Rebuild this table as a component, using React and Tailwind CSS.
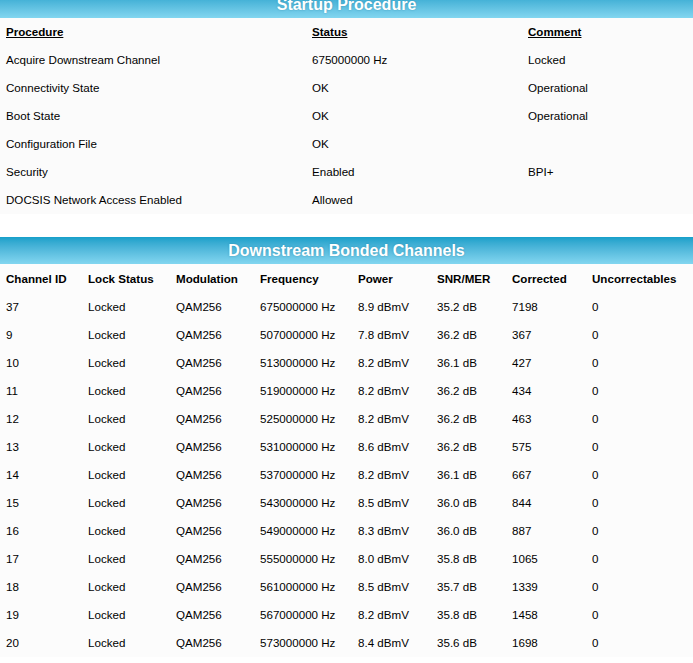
import React from "react";

const startup = [
  ["Acquire Downstream Channel", "675000000 Hz", "Locked"],
  ["Connectivity State", "OK", "Operational"],
  ["Boot State", "OK", "Operational"],
  ["Configuration File", "OK", ""],
  ["Security", "Enabled", "BPI+"],
  ["DOCSIS Network Access Enabled", "Allowed", ""],
];

const channels = [
  ["37", "675000000 Hz", "8.9 dBmV", "35.2 dB", "7198"],
  ["9", "507000000 Hz", "7.8 dBmV", "36.2 dB", "367"],
  ["10", "513000000 Hz", "8.2 dBmV", "36.1 dB", "427"],
  ["11", "519000000 Hz", "8.2 dBmV", "36.2 dB", "434"],
  ["12", "525000000 Hz", "8.2 dBmV", "36.2 dB", "463"],
  ["13", "531000000 Hz", "8.6 dBmV", "36.2 dB", "575"],
  ["14", "537000000 Hz", "8.2 dBmV", "36.1 dB", "667"],
  ["15", "543000000 Hz", "8.5 dBmV", "36.0 dB", "844"],
  ["16", "549000000 Hz", "8.3 dBmV", "36.0 dB", "887"],
  ["17", "555000000 Hz", "8.0 dBmV", "35.8 dB", "1065"],
  ["18", "561000000 Hz", "8.5 dBmV", "35.7 dB", "1339"],
  ["19", "567000000 Hz", "8.2 dBmV", "35.8 dB", "1458"],
  ["20", "573000000 Hz", "8.4 dBmV", "35.6 dB", "1698"],
];

const Banner = ({ title }) => (
  <div className="h-[27px] bg-gradient-to-b from-[#15a0ca] to-[#82d6f0] flex items-center justify-center">
    <h2 className="text-white font-bold text-[16px] leading-none [text-shadow:0_0_2px_rgba(0,80,110,0.35)]">{title}</h2>
  </div>
);

const startupCols = "grid grid-cols-[306px_216px_1fr]";
const chanCols = "grid grid-cols-[82px_88px_84px_98px_79px_75px_80px_1fr]";

export default function App() {
  return (
    <div className="min-h-screen bg-[#1c2c3a] text-black text-[11.6px] font-['Liberation_Sans',Arial,sans-serif]">
      <div className="bg-white -mt-[9px]">
        <Banner title="Startup Procedure" />
        <div className="bg-[#fbfbfb]">
          <div className={`${startupCols} h-[28px] items-center font-bold underline`}>
            <div className="pl-[6px]">Procedure</div>
            <div className="pl-[6px]">Status</div>
            <div className="pl-[6px]">Comment</div>
          </div>
          {startup.map((r) => (
            <div key={r[0]} className={`${startupCols} h-[28px] items-center`}>
              <div className="pl-[6px]">{r[0]}</div>
              <div className="pl-[6px]">{r[1]}</div>
              <div className="pl-[6px]">{r[2]}</div>
            </div>
          ))}
        </div>

        <div className="h-[23px] bg-white" />

        <Banner title="Downstream Bonded Channels" />
        <div className="bg-[#fcfcfc] pt-px">
          <div className={`${chanCols} h-[28px] items-center font-bold`}>
            {["Channel ID", "Lock Status", "Modulation", "Frequency", "Power", "SNR/MER", "Corrected", "Uncorrectables"].map((h) => (
              <div key={h} className="pl-[6px] whitespace-nowrap">{h}</div>
            ))}
          </div>
          {channels.map((c) => (
            <div key={c[0]} className={`${chanCols} h-[28px] items-center`}>
              <div className="pl-[6px]">{c[0]}</div>
              <div className="pl-[6px]">Locked</div>
              <div className="pl-[6px]">QAM256</div>
              <div className="pl-[6px] whitespace-nowrap">{c[1]}</div>
              <div className="pl-[6px] whitespace-nowrap">{c[2]}</div>
              <div className="pl-[6px] whitespace-nowrap">{c[3]}</div>
              <div className="pl-[6px]">{c[4]}</div>
              <div className="pl-[6px]">0</div>
            </div>
          ))}
        </div>
      </div>
    </div>
  );
}
